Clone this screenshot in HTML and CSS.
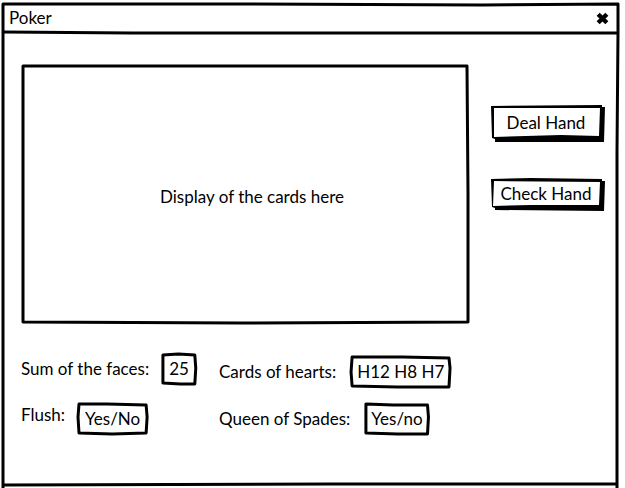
FILE: index.html
```html
<!DOCTYPE html>
<html lang="en">
<head>
<meta charset="utf-8">
<meta name="viewport" content="width=device-width, initial-scale=1">
<title>Poker</title>
<link rel="stylesheet" href="styles.css">
</head>
<body>
<div class="window">
  <svg class="ink window-ink" viewBox="0 0 618 490" preserveAspectRatio="none" aria-hidden="true">
    <path d="M1 490 L1 2 L250 2 L480 3 L616 2 L616 30 L615 150 L615 490"/>
  </svg>
  <header class="titlebar">
    <h1 class="title">Poker</h1>
    <button class="close" type="button" aria-label="Close">
      <svg viewBox="0 0 12 12" aria-hidden="true"><path d="M2 2 L10 10 M10 2 L2 10"/></svg>
    </button>
    <svg class="ink" viewBox="0 0 618 32" preserveAspectRatio="none" aria-hidden="true">
      <path d="M2 30 L130 31 L616 31"/>
    </svg>
  </header>
  <main class="content">
    <div class="table-area">
      <section class="display">
        <svg class="ink" viewBox="0 0 448 260" preserveAspectRatio="none" aria-hidden="true">
          <path d="M2 2 L240 2 L446 2 L447 130 L447 258 L220 259 L2 258 L2 100 Z"/>
        </svg>
        <p>Display of the cards here</p>
      </section>
      <div class="actions">
        <button class="action tall" type="button">
          <svg class="ink" viewBox="0 0 114 37" preserveAspectRatio="none" aria-hidden="true">
            <path class="solid" d="M0 1 L111 0 V2 H114 L113 37 L4 37 V34 L1 33 Z"/>
            <path class="face" d="M3 3 L109 3 L108 31 L70 30 L3 32 Z"/>
          </svg>
          <span>Deal Hand</span>
        </button>
        <button class="action" type="button">
          <svg class="ink" viewBox="0 0 114 33" preserveAspectRatio="none" aria-hidden="true">
            <path class="solid" d="M0 1 L40 0 L111 1 V3 H114 L113 33 L4 32 V30 L1 29 Z"/>
            <path class="face" d="M3 3 L109 4 L108 27 L40 27 L2 28 Z"/>
          </svg>
          <span>Check Hand</span>
        </button>
      </div>
    </div>
    <div class="results">
      <div class="column">
        <div class="field">
          <label for="sum">Sum of the faces:</label>
          <output class="value" id="sum"><svg class="ink" viewBox="0 0 37 32" preserveAspectRatio="none" aria-hidden="true"><path d="M2 2 L18 1 L35 2 L36 15 L35 31 L20 31 L2 30 L2 14 Z"/></svg>25</output>
        </div>
        <div class="field raised">
          <label for="flush">Flush:</label>
          <output class="value" id="flush"><svg class="ink" viewBox="0 0 71 32" preserveAspectRatio="none" aria-hidden="true"><path d="M2 1 L30 1 L69 2 L70 14 L69 30 L35 31 L2 30 L1 14 Z"/></svg>Yes/No</output>
        </div>
      </div>
      <div class="column close-set">
        <div class="field">
          <label for="hearts">Cards of hearts:</label>
          <output class="value" id="hearts"><svg class="ink" viewBox="0 0 96 32" preserveAspectRatio="none" aria-hidden="true"><path d="M2 1 L50 1 L94 2 L95 12 L94 31 L45 31 L2 30 L1 16 Z"/></svg>H12 H8 H7</output>
        </div>
        <div class="field">
          <label for="queen">Queen of Spades:</label>
          <output class="value" id="queen"><svg class="ink" viewBox="0 0 68 32" preserveAspectRatio="none" aria-hidden="true"><path d="M2 1 L30 2 L66 2 L67 14 L66 31 L35 31 L2 30 L2 14 Z"/></svg>Yes/no</output>
        </div>
      </div>
    </div>
  </main>
  <footer class="statusbar">
    <svg class="ink" viewBox="0 0 618 6" preserveAspectRatio="none" aria-hidden="true">
      <path d="M2 3 L330 2 L616 2"/>
    </svg>
  </footer>
</div>
</body>
</html>
```
FILE: styles.css
```css
* {
  box-sizing: border-box;
}

body {
  margin: 0;
  background: #fff;
  color: #000;
  font: 17px/20px Lato, "Liberation Sans", sans-serif;
  overflow: hidden;
}

h1,
p {
  margin: 0;
  font: inherit;
}

button {
  border: 0;
  padding: 0;
  background: none;
  color: inherit;
  font: inherit;
  cursor: pointer;
}

.window {
  position: relative;
  display: flex;
  flex-direction: column;
  min-height: 100vh;
  margin: 0 5px 0 2px;
  padding-top: 2px;
}

/* Hand-drawn outlines stretched over their box */
.ink {
  position: absolute;
  inset: 0;
  width: 100%;
  height: 100%;
  overflow: visible;
  pointer-events: none;
}

.ink path {
  fill: none;
  stroke: #000;
  stroke-width: 3px;
  stroke-linejoin: round;
  vector-effect: non-scaling-stroke;
}

.ink .solid {
  fill: #000;
  stroke: none;
}

.ink .face {
  fill: #fff;
  stroke: none;
}

.window-ink {
  top: 2px;
}

.titlebar {
  position: relative;
  display: flex;
  align-items: center;
  justify-content: space-between;
  height: 32px;
  padding: 0 11px 0 7px;
}

.close {
  width: 13px;
  height: 13px;
}

.close svg {
  display: block;
}

.close path {
  stroke: #000;
  stroke-width: 4px;
}

.content {
  flex: 1;
  padding: 30px 15px 0 19px;
}

.table-area {
  display: flex;
  gap: 22px;
}

.display {
  position: relative;
  display: grid;
  flex: 1;
  place-items: center;
  min-height: 260px;
  padding: 6px 0 0 14px;
}

.actions {
  display: flex;
  flex-direction: column;
  gap: 36px;
  width: 114px;
  padding-top: 41px;
}

.action {
  position: relative;
  height: 33px;
  padding: 0 4px 2px 0;
}

.action.tall {
  height: 37px;
}

.action span {
  position: relative;
}

.results {
  display: flex;
  align-items: flex-end;
  gap: 20px;
  padding-top: 29px;
}

.column {
  display: flex;
  flex-direction: column;
  gap: 18px;
  min-width: 178px;
}

.close-set {
  gap: 15px;
}

.field {
  display: flex;
  align-items: center;
  gap: 12px;
}

.close-set .field {
  gap: 14px;
}

.raised {
  align-items: flex-start;
}

.raised label {
  line-height: 24px;
}

.value {
  position: relative;
  padding: 6px 8px;
}

.close-set .value {
  padding: 6px 7px;
}

.statusbar {
  position: relative;
  height: 6px;
}
```
